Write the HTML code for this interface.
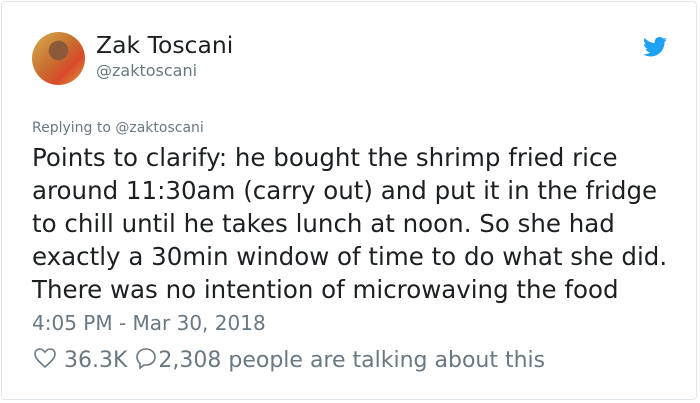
<!DOCTYPE html>
<html><head><style>
body{margin:0;width:700px;height:403px;background:#fff;font-family:"DejaVu Sans","Liberation Sans",sans-serif;overflow:hidden}
.card{position:absolute;left:1px;top:1px;width:696px;height:399px;border:1px solid #e1e8ed;border-radius:4px;box-sizing:border-box}
.av{position:absolute;left:32px;top:32px;width:53px;height:53px;border-radius:50%;background:radial-gradient(circle at 50% 35%,#8a5a3a 0 22%,transparent 23%),linear-gradient(135deg,#d8b050 0%,#c87030 45%,#d84a2a 70%,#e0a040 100%)}
.name{position:absolute;left:96px;top:31px;font-size:23.5px;color:#1c2022}
.handle{position:absolute;left:96px;top:61px;font-size:16px;color:#697882}
.rep{position:absolute;left:32px;top:120px;font-size:14px;color:#697882}
.txt{position:absolute;left:32px;top:141px;font-size:24.5px;line-height:33px;color:#1c2022;white-space:nowrap}
.time{position:absolute;left:32px;top:311px;font-size:20px;color:#697882}
.stats{position:absolute;left:33px;top:346px;font-size:22px;color:#697882;white-space:nowrap}
svg{vertical-align:-3px}
</style></head><body>
<div class="card"></div>
<div class="av"></div>
<div class="name">Zak Toscani</div>
<div class="handle">@zaktoscani</div>
<svg style="position:absolute;left:643px;top:37px" width="24" height="20" viewBox="0 0 24 20"><path fill="#1da1f2" d="M24 2.4c-.9.4-1.8.6-2.8.8 1-.6 1.8-1.600 2.2-2.7-1 .6-2 1-3.1 1.2C19.4.7 18.1 0 16.6 0c-2.7 0-4.9 2.2-4.9 4.9 0 .4 0 .8.1 1.1C7.7 5.8 4.1 3.9 1.7.9c-.4.7-.7 1.6-.7 2.5 0 1.7.9 3.2 2.2 4.1-.8 0-1.6-.2-2.2-.6v.1c0 2.4 1.7 4.4 3.9 4.8-.4.1-.8.2-1.3.2-.3 0-.6 0-.9-.1.6 2 2.4 3.4 4.6 3.4-1.700 1.3-3.8 2.1-6.1 2.1-.4 0-.8 0-1.2-.1 2.2 1.4 4.8 2.2 7.5 2.200 9.1 0 14-7.5 14-14v-.6c1-.7 1.8-1.6 2.5-2.5z"/></svg>
<div class="rep">Replying to @zaktoscani</div>
<div class="txt">Points to clarify: he bought the shrimp fried rice<br>around 11:30am (carry out) and put it in the fridge<br>to chill until he takes lunch at noon. So she had<br>exactly a 30min window of time to do what she did.<br>There was no intention of microwaving the food</div>
<div class="time">4:05 PM - Mar 30, 2018</div>
<div class="stats"><svg width="24" height="24" viewBox="0 0 24 24"><path fill="none" stroke="#697882" stroke-width="1.6" d="M12 21C5 15 2 11.5 2 7.8 2 5 4.2 3 6.8 3c2.1 0 3.8 1.3 5.2 3.2C13.4 4.3 15.1 3 17.2 3 19.8 3 22 5 22 7.8c0 3.7-3 7.2-10 13.2z"/></svg> 36.3K <svg width="24" height="24" viewBox="0 0 24 24"><path fill="none" stroke="#697882" stroke-width="1.6" d="M12 3c5 0 9 3.4 9 8s-4 8-9 8c-.6 0-1.2 0-1.8-.1L6 22v-4.5C4.2 16 3 13.7 3 11c0-4.6 4-8 9-8z"/></svg>2,308 people are talking about this</div>
</body></html>
